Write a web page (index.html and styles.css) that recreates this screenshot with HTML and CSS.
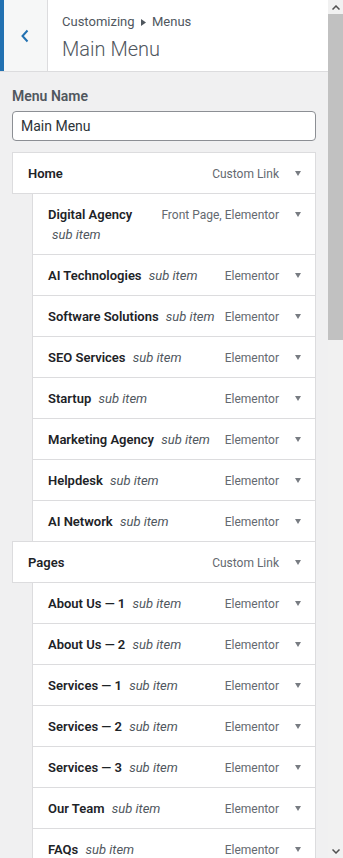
FILE: index.html
```html
<!DOCTYPE html>
<html lang="en">
<head>
    <meta charset="UTF-8">
    <meta name="viewport" content="width=device-width, initial-scale=1.0">
    <title>Customizing Menus - Main Menu</title>
    <link rel="stylesheet" href="styles.css">
</head>
<body>
    <div class="frame">
        <div class="panel">
            <header class="section-head">
                <button class="back" aria-label="Back">
                    <svg width="10" height="14" viewBox="0 0 10 14"><path d="M7.5 1.5 L2.5 7 L7.5 12.5" fill="none" stroke="#2271b1" stroke-width="2"/></svg>
                </button>
                <div class="titles">
                    <span class="crumb">Customizing <svg class="sep" width="5" height="7" viewBox="0 0 5 7"><path d="M0 0 L5 3.5 L0 7 Z" fill="#50575e"/></svg> Menus</span>
                    <h3>Main Menu</h3>
                </div>
            </header>
            <div class="content">
                <label class="control-title" for="menuName">Menu Name</label>
                <input class="menu-name" id="menuName" type="text" value="Main Menu">
                <ul class="menu-items">
                    <li class="menu-item"><span class="item-title">Home</span><span class="item-type">Custom Link</span><span class="toggle"></span></li>
                    <li class="menu-item sub"><span class="item-title">Digital Agency <span class="is-submenu">sub item</span></span><span class="item-type">Front Page, Elementor</span><span class="toggle"></span></li>
                    <li class="menu-item sub"><span class="item-title">AI Technologies <span class="is-submenu">sub item</span></span><span class="item-type">Elementor</span><span class="toggle"></span></li>
                    <li class="menu-item sub"><span class="item-title">Software Solutions <span class="is-submenu">sub item</span></span><span class="item-type">Elementor</span><span class="toggle"></span></li>
                    <li class="menu-item sub"><span class="item-title">SEO Services <span class="is-submenu">sub item</span></span><span class="item-type">Elementor</span><span class="toggle"></span></li>
                    <li class="menu-item sub"><span class="item-title">Startup <span class="is-submenu">sub item</span></span><span class="item-type">Elementor</span><span class="toggle"></span></li>
                    <li class="menu-item sub"><span class="item-title">Marketing Agency <span class="is-submenu">sub item</span></span><span class="item-type">Elementor</span><span class="toggle"></span></li>
                    <li class="menu-item sub"><span class="item-title">Helpdesk <span class="is-submenu">sub item</span></span><span class="item-type">Elementor</span><span class="toggle"></span></li>
                    <li class="menu-item sub"><span class="item-title">AI Network <span class="is-submenu">sub item</span></span><span class="item-type">Elementor</span><span class="toggle"></span></li>
                    <li class="menu-item"><span class="item-title">Pages</span><span class="item-type">Custom Link</span><span class="toggle"></span></li>
                    <li class="menu-item sub"><span class="item-title">About Us — 1 <span class="is-submenu">sub item</span></span><span class="item-type">Elementor</span><span class="toggle"></span></li>
                    <li class="menu-item sub"><span class="item-title">About Us — 2 <span class="is-submenu">sub item</span></span><span class="item-type">Elementor</span><span class="toggle"></span></li>
                    <li class="menu-item sub"><span class="item-title">Services — 1 <span class="is-submenu">sub item</span></span><span class="item-type">Elementor</span><span class="toggle"></span></li>
                    <li class="menu-item sub"><span class="item-title">Services — 2 <span class="is-submenu">sub item</span></span><span class="item-type">Elementor</span><span class="toggle"></span></li>
                    <li class="menu-item sub"><span class="item-title">Services — 3 <span class="is-submenu">sub item</span></span><span class="item-type">Elementor</span><span class="toggle"></span></li>
                    <li class="menu-item sub"><span class="item-title">Our Team <span class="is-submenu">sub item</span></span><span class="item-type">Elementor</span><span class="toggle"></span></li>
                    <li class="menu-item sub"><span class="item-title">FAQs <span class="is-submenu">sub item</span></span><span class="item-type">Elementor</span><span class="toggle"></span></li>
                </ul>
            </div>
        </div>
        <div class="scrollbar">
            <div class="sb-button">
                <svg width="8" height="5" viewBox="0 0 8 5"><path d="M0.5 4.5 L4 1 L7.5 4.5" fill="none" stroke="#505050" stroke-width="1.5"/></svg>
            </div>
            <div class="sb-thumb"></div>
            <div class="sb-track"></div>
            <div class="sb-button">
                <svg width="8" height="5" viewBox="0 0 8 5"><path d="M0.5 0.5 L4 4 L7.5 0.5" fill="none" stroke="#505050" stroke-width="1.5"/></svg>
            </div>
        </div>
    </div>
</body>
</html>
```

FILE: styles.css
```css
body {
    margin: 0;
    height: 858px;
    overflow: hidden;
    font-family: Roboto, "Open Sans", sans-serif;
    background-color: #f0f0f1;
    color: #1d2327;
}
.frame {
    display: flex;
    height: 858px;
}
.panel {
    width: 328px;
    overflow: hidden;
}
.section-head {
    display: flex;
    height: 71px;
    background-color: #fff;
    border-bottom: 1px solid #dcdcde;
}
.back {
    width: 48px;
    padding: 0;
    margin: 0;
    border: 0;
    border-left: 4px solid #2271b1;
    border-right: 1px solid #dcdcde;
    background-color: #f6f7f7;
    display: flex;
    justify-content: center;
    align-items: center;
}
.back svg {
    margin-left: -1px;
}
.titles {
    padding: 13px 14px 0 14px;
}
.crumb {
    display: block;
    font-size: 13px;
    line-height: 18px;
    color: #50575e;
}
.sep {
    margin: 0 3px;
}
.titles h3 {
    margin: 5px 0 0;
    font-size: 20px;
    font-weight: 300;
    line-height: 26px;
    color: #50575e;
}
.content {
    padding: 14px 12px 0 12px;
}
.control-title {
    display: block;
    font-size: 14px;
    font-weight: 600;
    line-height: 20px;
    color: #50575e;
    margin-bottom: 5px;
}
.menu-name {
    display: block;
    box-sizing: border-box;
    width: 304px;
    height: 30px;
    margin: 0;
    padding: 0 8px;
    border: 1px solid #8c8f94;
    border-radius: 4px;
    font-family: Roboto, "Open Sans", sans-serif;
    font-size: 14px;
    color: #2c3338;
    background-color: #fff;
}
.menu-items {
    list-style: none;
    margin: 11px 0 0;
    padding: 0;
}
.menu-item {
    display: flex;
    align-items: flex-start;
    margin-top: -1px;
    padding: 11px 14px 9px 15px;
    background-color: #fff;
    border: 1px solid #dcdcde;
}
.menu-item:first-child {
    margin-top: 0;
}
.menu-item.sub {
    margin-left: 20px;
}
.item-title {
    flex: 1;
    min-width: 0;
    font-size: 13px;
    font-weight: 600;
    line-height: 20px;
    color: #1d2327;
}
.is-submenu {
    margin-left: 4px;
    font-style: italic;
    font-weight: 400;
    color: #50575e;
}
.item-type {
    margin-left: 7px;
    font-size: 12px;
    line-height: 20px;
    color: #646970;
    white-space: nowrap;
}
.toggle {
    width: 0;
    height: 0;
    margin: 7px 0 0 16px;
    border-left: 3.5px solid transparent;
    border-right: 3.5px solid transparent;
    border-top: 5px solid #787c82;
}
.scrollbar {
    width: 15px;
    display: flex;
    flex-direction: column;
    background-color: #f1f1f1;
}
.sb-button {
    height: 14px;
    display: flex;
    justify-content: center;
    align-items: center;
}
.sb-thumb {
    height: 326px;
    background-color: #c1c1c1;
}
.sb-track {
    flex: 1;
}
```
